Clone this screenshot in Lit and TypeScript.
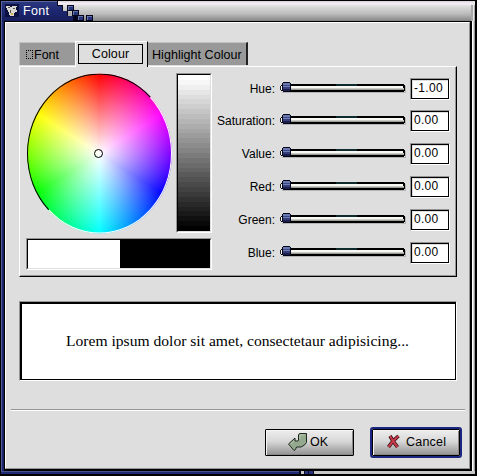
import { LitElement, html, svg, css, unsafeCSS } from "lit";
import { customElement, property } from "lit/decorators.js";

const STEPS = 32;
const rampStops = Array.from({ length: STEPS }, (_, i) => {
  const g = Math.round(255 * (1 - i / (STEPS - 1)));
  return `rgb(${g},${g},${g}) ${(i * 100) / STEPS}% ${((i + 1) * 100) / STEPS}%`;
}).join(",");

@customElement("hsv-slider")
class HsvSlider extends LitElement {
  @property() label = "";
  @property() value = "";
  static styles = css`
    :host { display: grid; grid-template-columns: 64px 125px 40px; column-gap: 5px; height: 22px; align-items: start; }
    .label { text-align: right; line-height: 22px; height: 22px; padding-right: 1px; font-size: 12px; white-space: nowrap; }
    svg { display: block; margin-left: -1px; margin-top: 3px; }
    .entry { box-sizing: border-box; width: 40px; height: 22px; background: #fff; border: 1px solid; border-color: #959595 #fff #fff #959595; margin-left: -1px; }
    .inner { height: 18px; border: 1px solid #000; line-height: 16px; padding-left: 2px; font-size: 12px; letter-spacing: .3px; box-shadow: inset 1px 1px #ddd; }
  `;
  render() {
    return html`
      <span class="label">${this.label}</span>
      <svg width="127" height="14" shape-rendering="crispEdges">
        <path d="M2 11h123v-6h1v7H2z" fill="#b5b5b5"/>
        <path d="M3 3h121v1h1v6h-1v1H3v-1H1V4h2z" fill="#000"/>
        <path d="M0 5h1v4H0z" fill="#222"/>
        <rect x="56" y="3" width="21" height="2" fill="#0f2b2d"/>
        <rect x="10" y="5" width="113" height="2" fill="#f7f7f3"/>
        <rect x="10" y="7" width="114" height="1" fill="#c9cbc5"/>
        <rect x="10" y="8" width="114" height="1" fill="#9a9c96"/>
        <rect x="1" y="5" width="2" height="4" fill="#fff"/>
        <path d="M3 1h7v1h1v8h-1v1H3v-1H2V2h1z" fill="#050518"/>
        <rect x="3" y="2" width="7" height="2" fill="#6b7ab2"/>
        <rect x="3" y="4" width="7" height="1" fill="#3c4784"/>
        <rect x="3" y="5" width="7" height="1" fill="#7180b8"/>
        <rect x="3" y="6" width="7" height="2" fill="#353d78"/>
        <rect x="3" y="8" width="7" height="2" fill="#1c1f4c"/>
      </svg>
      <div class="entry"><div class="inner">${this.value}</div></div>`;
  }
}

@customElement("app-root")
class AppRoot extends LitElement {
  static styles = css`
    :host { display: block; width: 477px; height: 476px; font: 12.5px "Liberation Sans", sans-serif; color: #000; overflow: hidden; }
    * { box-sizing: border-box; }
    .window { width: 477px; height: 476px; background: #000; padding: 1px 2px 2px 1px; display: grid; grid-template-columns: 3px 1fr 3px; grid-template-rows: 20px 1fr 3px; }
    .title { grid-column: 1 / 4; }
    .title svg, .foot svg { display: block; }
    .left { background: linear-gradient(90deg, #4e5a93 1px, #1f2a75 1px 2px, #182060 2px); }
    .right { background: linear-gradient(90deg, #fff 1px, #d5d5d5 1px 2px, #999 2px); }
    .foot { grid-column: 1 / 4; }
    .body { margin: 1px 0 2px 1px; background: #dedede; border: 1px solid; border-color: #fff #959595 #959595 #fff; padding: 18px 0 0 13px; width: 465px; }
    .tabs { display: flex; height: 25px; align-items: flex-end; }
    .tab { background: #999; height: 23px; line-height: 24px; border-top: 1px solid #c2c2c2; white-space: nowrap; }
    .t1 { width: 56px; padding-left: 6px; border-left: 1px solid #c2c2c2; display: flex; margin-bottom: 1px; }
    .miss { width: 7px; height: 9px; border: 1px dotted #000; margin: 7px 1px 0 0; }
    .t2 { width: 73px; height: 26px; border: solid; border-width: 1px 1px 0; border-color: #fff #000 #fff #fff; background: #dedede; padding: 2px 0 0 2px; z-index: 1; margin-bottom: -1px; }
    .focus { width: 65px; height: 20px; border: 1px solid #000; text-align: center; line-height: 18px; letter-spacing: .1px; }
    .t3 { width: 100px; margin-bottom: 1px; padding-left: 4px; border-right: 2px solid #222; letter-spacing: .05px; }
    .pane { width: 438px; height: 211px; border: 1px solid; border-color: #fff #000 #000 #fff; box-shadow: inset -1px -1px #959595; padding: 6px 0 0 6px; display: grid; grid-template-columns: 186px 1fr; }
    .pick { display: grid; grid-template-columns: 150px 36px; grid-template-rows: 165px 32px; }
    .wheelbox { position: relative; padding: 8px 0 0 1px; }
    .wheel { width: 145px; height: 145px; border-radius: 50%; transform: scaleY(1.104); position: relative;
      background: radial-gradient(closest-side, #fff, #fff0), conic-gradient(#f00, #f0f, #00f, #0ff, #0f0, #ff0, #f00); }
    .wheel::before { content: ""; position: absolute; inset: 0; border-radius: 50%; border: 1px solid; border-color: #000 #fff #fff #000; }
    .mark { position: absolute; left: 68px; top: 76px; width: 9px; height: 9px; border: 1px solid #000; border-radius: 50%; }
    .well { border: 1px solid; border-color: #959595 #fff #fff #959595; }
    .well > div { height: 100%; border: 1px solid; border-color: #000 #dedede #dedede #000; }
    .value { height: 160px; }
    .ramp { background: linear-gradient(${unsafeCSS(rampStops)}); }
    .swatch { grid-column: 1 / 3; }
    .pair { background: linear-gradient(90deg, #fff 92px, #000 92px); }
    .sliders { padding-top: 5px; }
    hsv-slider { margin-bottom: 11px; }
    hsv-slider:first-child { margin-bottom: 10px; }
    .preview { width: 438px; height: 80px; margin-top: 24px; }
    .preview > div { border: solid #000; border-width: 2px 1px 1px 2px; background: #fff; font: 15.6px/74px "Liberation Serif", serif; padding-left: 44px; white-space: nowrap; }
    .rule { width: 454px; height: 2px; background: linear-gradient(#959595 1px, #fff 1px); margin: 28px 0 0 -8px; }
    .buttons { display: flex; justify-content: flex-end; gap: 16px; margin-top: 16px; padding-right: 7px; align-items: center; }
    .btn { width: 89px; height: 27px; border: 1px solid #000; border-radius: 1px; background: linear-gradient(#eee, #d8d8d8 45%, #929292); box-shadow: inset 1px 1px #f5f5f5, inset -1px -1px #888; display: flex; align-items: center; }
    .ring { border: 2px solid #1b2680; border-radius: 3px; width: 92px; height: 31px; }
    .ring .btn { width: 88px; }
    .ok { padding: 0 0 2px 22px; gap: 2px; }
    .cancel { padding: 0 0 2px 13px; gap: 5px; letter-spacing: .2px; }
  `;
  block(x: number, y: number) {
    return svg`<rect x=${x} y=${y} width="7" height="6" fill="#05051c"/><rect x=${x + 1} y=${y + 1} width="5" height="4" fill="#26347e"/><path d="M${x + 1} ${y + 1}h5v1h-4v3h-1z" fill="#6875aa"/>`;
  }
  render() {
    return html`
    <div class="window">
      <div class="title"><svg width="474" height="20" shape-rendering="crispEdges">
        <defs>
          <linearGradient id="g" x2="0" y2="1"><stop offset="0" stop-color="#d8d0d8"/><stop offset=".12" stop-color="#f6eef6"/><stop offset=".3" stop-color="#d8d8d8"/><stop offset=".65" stop-color="#bbb"/><stop offset="1" stop-color="#858585"/></linearGradient>
          <linearGradient id="b" x2="0" y2="1"><stop offset="0" stop-color="#2c397f"/><stop offset=".5" stop-color="#1c2770"/><stop offset="1" stop-color="#171e5c"/></linearGradient>
        </defs>
        <rect width="474" height="20" fill="url(#g)"/>
        <path d="M0 0h57v4h5v6h5v5h9v5H0z" fill="#05051c"/>
        <path d="M0 0h56v5h5v5h5v5h6v5H0z" fill="url(#b)"/>
        <path d="M0 0h56v1H1v19H0z" fill="#5964a0"/>
        ${this.block(66, 4)}${this.block(71, 9)}${this.block(76, 14)}${this.block(85, 14)}
        <path d="M67 11h3v3h-3z" fill="#aaa"/>
        <path d="M470 4h4v16h-4z" fill="#aaa"/><path d="M472 0h1v20h-1z" fill="#e8e8e8"/>
        <rect x="4" y="3" width="14" height="13" fill="#0b1040"/>
        <path d="M5 5h4v1h2v-1h5v1h-1v3h1v2h-2v1h-1v3h-4v-1h-1v-3h-1v-2h-1v-2H5z" fill="#d8d8d0"/>
        <path d="M7 6h2v1H7zM12 7h2v1h-2zM9 9h1v3H9z" fill="#555"/><path d="M10 12h2v2h-2z" fill="#d7b34c"/>
        <text x="22" y="14" fill="#fff" font-family="Liberation Sans, sans-serif" font-size="12.5" textLength="26">Font</text>
      </svg></div>
      <div class="left"></div>
      <div class="body">
        <div class="tabs">
          <div class="tab t1"><i class="miss"></i>Font</div>
          <div class="t2"><div class="focus">Colour</div></div>
          <div class="tab t3">Highlight Colour</div>
        </div>
        <div class="pane">
          <div class="pick">
            <div class="wheelbox"><div class="wheel"></div><div class="mark"></div></div>
            <div class="well value"><div class="ramp"></div></div>
            <div class="well swatch"><div class="pair"></div></div>
          </div>
          <div class="sliders">
            ${[["Hue:", "-1.00"], ["Saturation:", "0.00"], ["Value:", "0.00"], ["Red:", "0.00"], ["Green:", "0.00"], ["Blue:", "0.00"]].map(([l, v]) => html`<hsv-slider .label=${l} .value=${v}></hsv-slider>`)}
          </div>
        </div>
        <div class="well preview"><div>Lorem ipsum dolor sit amet, consectetaur adipisicing...</div></div>
        <div class="rule"></div>
        <div class="buttons">
          <div class="btn ok"><svg width="20" height="18"><path d="M10.500 2l1-1.500h7v9l-2 2.500-3.500 2H8.500l-1 2.500-1.500 1L.5 11l6.500-6v3h3l.500-1z" fill="#94a88e" stroke="#1d291c"/><path d="M12 6V2h4.500M2.500 11L6 8" fill="none" stroke="#b9c8b3"/></svg>OK</div>
          <div class="ring"><div class="btn cancel"><svg width="15" height="15"><path d="M4 2l3 5 4.500 6M12.500 2L7 7l-4.500 6" fill="none" stroke="#2a080b" stroke-width="3.600"/><path d="M4 2l3 5 4.500 6M12.500 2L7 7l-4.500 6" fill="none" stroke="#c63b49" stroke-width="2.200"/></svg>Cancel</div></div>
        </div>
      </div>
      <div class="right"></div>
      <div class="foot"><svg width="474" height="3" shape-rendering="crispEdges"><rect width="474" height="3" fill="#c8c8c8"/><rect width="300" height="3" fill="#1f2a75"/><rect width="300" height="1" fill="#46518d"/><path d="M298 0h2v3h-2zM303 0h1v3h-1zM307 0h1v3h-1zM312 0h1v3h-1z" fill="#05051c"/><path d="M304 0h3v3h-3zM308 0h4v3h-4z" fill="#26347e"/></svg></div>
    </div>`;
  }
}
